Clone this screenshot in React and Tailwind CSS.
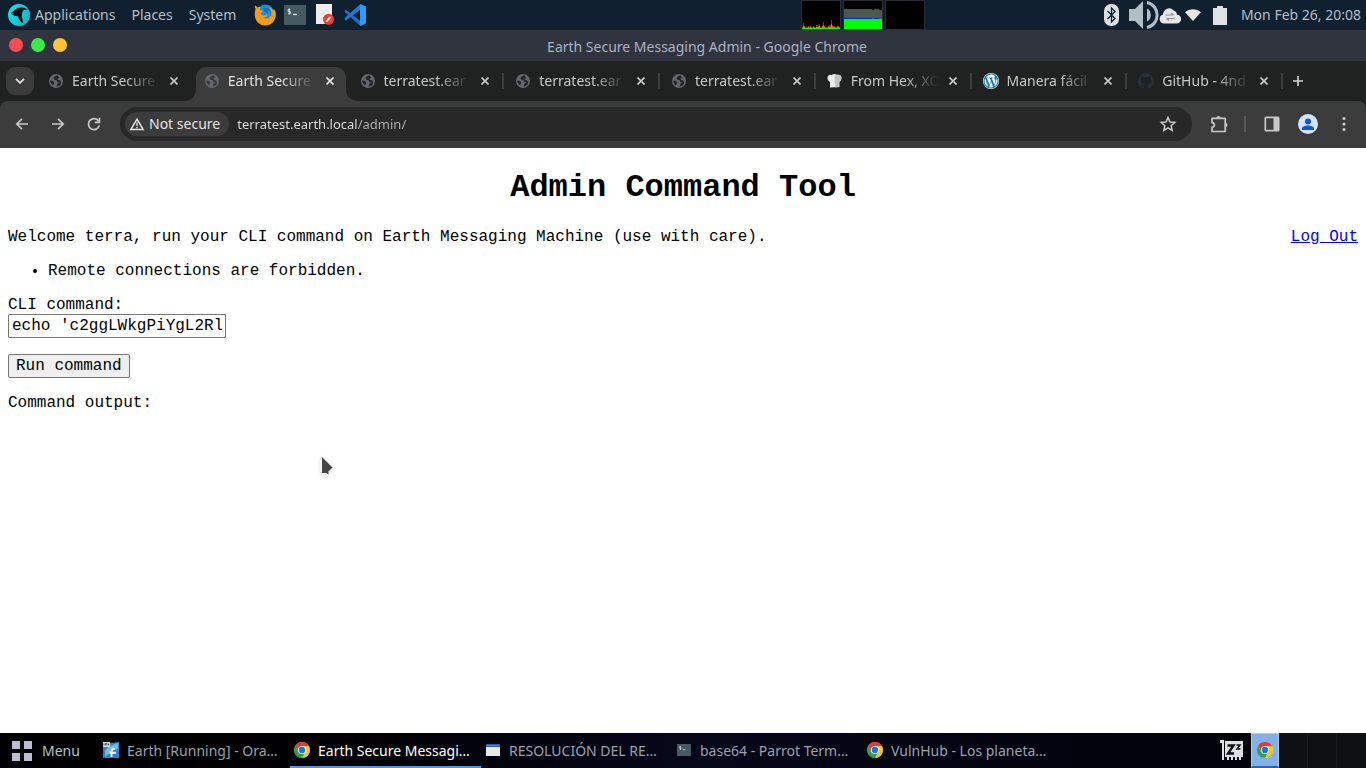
import React from "react";

const uiFont = "font-['Noto_Sans',sans-serif]";

function ParrotLogo() {
  return (
    <svg viewBox="0 0 22 22" className="size-[22px]" aria-hidden="true">
      <defs>
        <linearGradient id="parrot" x1="0" y1="0" x2="1" y2="0.5">
          <stop offset="0" stopColor="#12e6ee" />
          <stop offset="1" stopColor="#17b8cc" />
        </linearGradient>
      </defs>
      <circle cx="11" cy="11" r="11" fill="url(#parrot)" />
      <path d="M3 8.300C5.500 8 6.500 5.500 9 4.300 12 3 16 3.200 19.500 5.500c-2.800-.3-4.500.5-5 2.200-.6 2-.6 3.300-.4 5.300.2 2.500.8 4.500 1.400 6.500-2.800-1.500-5-4.300-5.500-7.300-2.500.3-5-.8-7-2.900 1.300.3 2.500.3 3.500 0C5 9.300 4 9 3 8.300z" fill="#0b0f14" />
    </svg>
  );
}

function FirefoxLogo() {
  return (
    <svg viewBox="0 0 22 22" className="size-[22px]" aria-hidden="true">
      <circle cx="11.500" cy="9" r="8.500" fill="#1a8fe0" />
      <path d="M1 1.500c1 .3 2 1.200 2.700 2 1-.5 2-.6 3.300-.2-1 .8-1.500 1.700-1 2.700 1 .2 2 .4 2.800.9-.2 1-1.200 1.600-2 2 .2 1.600 1.500 2.700 3.200 2.600 1.500-.1 2.400-1.200 3.800-.7-.7 2-3 3-4.800 2.900 3.500 2 8.200-.2 8.500-4.500.1-2.500-1-5-2.700-6.300 2 .6 3.700 2.200 4.600 4.100.3-.8.400-1.600.300-2.200C21.500 6.500 22 9 21.800 11.500 21.300 17.500 17 21.500 11.200 21.500 5.500 21.500 1 17 .8 11.300.7 8.500 1 6.500 1.500 5 1 4 .8 2.700 1 1.500z" fill="#f39a17" />
      <path d="M9 4.500c2.500-1.800 6-.5 7 2.500-1-.7-2-.8-2.700-.5.8 1 .7 2.200-.3 3-.5-1-1.400-1.600-2.500-1.700C10.500 6.500 10 5.500 9 4.500z" fill="#0f6fb8" />
    </svg>
  );
}

function TerminalLogo({ small }) {
  return (
    <svg viewBox="0 0 22 20" className={small ? "h-3 w-3.5" : "h-5 w-[22px]"} preserveAspectRatio="none" aria-hidden="true">
      <rect width="22" height="20" rx="1" fill="#465a64" />
      <path d="M6.300 4.500H4.200v2h2.100v2H4M5.300 3.500v6" stroke="#e8eef0" strokeWidth="0.9" fill="none" />
      <path d="M9 9.500h4" stroke="#e8eef0" strokeWidth="1.200" />
    </svg>
  );
}

function DocumentLogo() {
  return (
    <svg viewBox="0 0 18 21" className="h-[21px] w-[18px]" aria-hidden="true">
      <path d="M0 0h16v20H0z" fill="#ececec" />
      <circle cx="12.500" cy="15.300" r="5.500" fill="#f03c34" />
      <path d="M10.300 17.700l4.200-4.800" stroke="#fff" strokeWidth="2" />
    </svg>
  );
}

function CodeLogo() {
  return (
    <svg viewBox="0 0 22 22" className="size-[22px]" aria-hidden="true">
      <path d="M1.800 5.600 16.300 17.300v4.500L.5 8z" fill="#1f6fd0" />
      <path d="M.5 14.200 16.300.2v5.400L1.800 16.500z" fill="#1563b8" />
      <path d="M.5 14.200 1.800 16.500 16.300 5.500V.2z" fill="#2a85e0" opacity=".7" />
      <path d="M16 0l6 2.500v17L16 22z" fill="#2f9bf5" />
    </svg>
  );
}

const cpu = [1, 5, 2, 1, 1, 1, 2, 1, 2, 1, 1, 2, 1, 1, 3, 3, 2, 4, 1, 1, 2, 6, 2, 1, 1, 1, 2, 3, 3, 8, 3, 2, 2, 1, 1, 2, 2, 1];

function CpuGraph() {
  return (
    <svg viewBox="0 0 40 30" className="h-[30px] w-10" role="img" aria-label="Processor load">
      <rect x=".5" y=".5" width="39" height="29" fill="#000" stroke="#2a2d38" />
      {cpu.map((v, i) => (
        <g key={i}>
          <rect x={i + 1} y={28 - v} width="1" height={v + 1} fill="#f00" />
          <rect x={i + 1} y={29 - Math.ceil(v * 0.6)} width="1" height={Math.ceil(v * 0.6)} fill="#0f0" />
        </g>
      ))}
    </svg>
  );
}

function MemoryGraph() {
  return (
    <svg viewBox="0 0 40 30" className="h-[30px] w-10" role="img" aria-label="Memory use" shapeRendering="crispEdges">
      <path d="M0 0h40v30H0z" fill="#2a2d38" />
      <path d="M1 1h38v28H1z" fill="#000" />
      <path d="M1 9h28v1h2V9h5v1h3v9H1z" fill="#4a584f" />
      <path d="M1 18h28v1H1zM31 18h5v1h-5z" fill="#0a20f5" />
      <path d="M1 19h38v10H1z" fill="#0f0" />
    </svg>
  );
}

function BlankGraph() {
  return (
    <svg viewBox="0 0 40 30" className="h-[30px] w-10" role="img" aria-label="Network traffic">
      <rect x=".5" y=".5" width="39" height="29" fill="#000" stroke="#2a2d38" />
    </svg>
  );
}

function BluetoothIcon() {
  return (
    <svg viewBox="0 0 15 22" className="h-[22px] w-[15px]" aria-hidden="true">
      <rect width="15" height="22" rx="7" fill="#dde1e4" />
      <path d="M3.500 7l7.500 7.500L7.500 18V4L11 7.500 3.500 15" fill="none" stroke="#11202f" strokeWidth="1.300" />
    </svg>
  );
}

function VolumeIcon() {
  return (
    <svg viewBox="0 0 30 30" className="h-[30px] w-[30px]" aria-hidden="true">
      <path d="M0 9h6l8-8v28l-8-8H0z" fill="#b0bec6" />
      <path d="M18 8.500c5 2 5 11 0 13z" fill="#b0bec6" />
      <path d="M18 2.500c13.500 3 13.500 22 0 25" fill="none" stroke="#b0bec6" strokeWidth="3" />
    </svg>
  );
}

function CloudIcon() {
  return (
    <svg viewBox="0 0 22 17" className="h-[17px] w-[22px]" aria-hidden="true">
      <path d="M5 16.500a4.600 4.600 0 0 1-1-9C4 2.500 11-1.500 14.500 3.500c2 .3 3.300 1.800 3.300 4a4.500 4.500 0 0 1-.3 9z" fill="#e4e5e5" />
      <path d="M6.500 8h8M12 6l2.500 2M15.500 11.500h-8M10 13.500l-2.500-2" fill="none" stroke="#8a9095" strokeWidth="1.200" />
    </svg>
  );
}

function Globe({ active }) {
  const ink = active ? "#37393b" : "#222426";
  return (
    <svg viewBox="0 0 14 14" className="size-3.5" aria-hidden="true">
      <circle cx="7" cy="7" r="7" fill="#63666c" />
      <path d="M8.500 1.500C6.300 1.600 4.800 3 4.600 4.600c.1 1 1 1.300 1.900 1.400 1 .1 1.300.5 1.400 1.200.1.600.6.700 1.300.7.700.1.700.7.200 1.200-.9.700-1.300 1.300-1.400 2.200l-.4 1.300c1.800-.1 3.400-1.100 4.200-2.600.5-1.200.3-2.200-.4-3-.9-.9-2-.9-2.700-1.400-.7-.6-.3-1.100.5-1.300.7-.2.9-.7.600-1.300z" fill={ink} />
      <path d="M1.300 6.600c1.400 0 2.600.4 3.500 1.200.7.700.6 1.300 0 1.900-.5.400-.6.900-.7 1.600C2.300 10.400 1.300 8.600 1.300 6.600z" fill={ink} />
    </svg>
  );
}

function ChefIcon() {
  return (
    <svg viewBox="0 0 15 14" className="h-3.5 w-[15px]" aria-hidden="true">
      <path d="M1 2C2.500 0 4 .8 5 1c1-1.300 4-1.300 5 0 2-.8 4 .2 4.300 2 .5 2-.5 4-2 5v5L3 13.500V8C.5 7 0 4 1 2z" fill="#ececec" />
      <path d="M7.500 1.500 10 1c2-.8 4 .2 4.300 2 .5 2-.5 4-2 5v5l-4 .5z" fill="#c4c4c4" />
    </svg>
  );
}

function WordpressIcon() {
  return (
    <svg viewBox="0 0 24 24" className="size-4" aria-hidden="true">
      <circle cx="12" cy="12" r="12" fill="#fff" />
      <path d="M12 .8C5.800.8.800 5.800.800 12S5.800 23.200 12 23.200 23.200 18.200 23.200 12 18.200.8 12 .8zM2.400 12c0-1.400.3-2.700.8-3.900l4.600 12.500A9.600 9.600 0 0 1 2.400 12zm9.600 9.600c-.9 0-1.800-.1-2.700-.4l2.900-8.400 3 8.100.1.100c-1 .4-2.100.6-3.300.6zm1.300-14.100 1.100-.1c.5-.1.500-.8 0-.8 0 0-1.600.1-2.600.1-.9 0-2.500-.1-2.500-.1-.5 0-.6.8-.1.800l1 .1 1.500 4.100-2.100 6.300L6.100 7.500l1.100-.1c.5-.1.500-.8 0-.8 0 0-1.600.1-2.600.1H4a9.600 9.600 0 0 1 14.500-1.800h-.1c-.9 0-1.600.8-1.600 1.700 0 .8.500 1.400.9 2.200.4.600.8 1.400.8 2.600 0 .8-.2 1.800-.7 3l-.9 3.200zM16.800 20.300l3-8.500c.5-1.400.7-2.500.7-3.500v-.9a9.600 9.600 0 0 1-3.700 12.900z" fill="#0f7aae" />
    </svg>
  );
}

function GithubIcon() {
  return (
    <svg viewBox="0 0 16 16" className="size-4" aria-hidden="true">
      <path d="M8 0a8 8 0 0 0-2.530 15.590c.4.070.55-.17.550-.38v-1.490c-2.010.37-2.530-.49-2.690-.94-.09-.23-.48-.94-.82-1.130-.28-.15-.68-.52-.01-.53.63-.01 1.080.58 1.230.82.72 1.210 1.870.87 2.330.66.070-.52.280-.87.510-1.070-1.780-.2-3.640-.89-3.640-3.950 0-.87.310-1.590.820-2.150-.080-.2-.360-1.020.080-2.120 0 0 .67-.21 2.200.82a7.600 7.600 0 0 1 4 0c1.530-1.040 2.200-.82 2.200-.82.440 1.100.160 1.920.080 2.120.51.56.82 1.270.82 2.150 0 3.070-1.870 3.750-3.650 3.950.29.250.54.730.54 1.480v2.200c0 .21.150.46.550.38A8 8 0 0 0 8 0z" fill="#28303a" />
    </svg>
  );
}

function ChromeLogo() {
  return (
    <svg viewBox="0 0 48 48" className="size-4" aria-hidden="true">
      <circle cx="24" cy="24" r="23" fill="#fff" />
      <path d="M3.200 12A24 24 0 0 1 44.800 12H24a12 12 0 0 0-10.400 18z" fill="#e33b2e" />
      <path d="M44.800 12A24 24 0 0 1 24 48l10.400-18A12 12 0 0 0 24 12z" fill="#fcc31e" />
      <path d="M24 48A24 24 0 0 1 3.200 12l10.400 18a12 12 0 0 0 20.800 0z" fill="#2da04e" />
      <circle cx="24" cy="24" r="12" fill="#fff" />
      <circle cx="24" cy="24" r="9.500" fill="#1a73e8" />
    </svg>
  );
}

function VirtualBoxIcon() {
  return (
    <svg viewBox="0 0 16 16" className="size-4" aria-hidden="true">
      <path d="M0 2l16-2v16H0z" fill="#2f7fc4" />
      <path d="M2 9C4 5 9 3 15 1v6C10 7 6 12 2 15z" fill="#64bdf2" />
      <path d="M0 0h7v5H0z" fill="#d9dde0" />
      <path d="M1 3.500V1.500M2.500 3.500V1.500h1.500v2M5.500 3.500V1.500" stroke="#333" strokeWidth=".8" fill="none" />
      <path d="M8.500 15V9.500c0-2 1-3 3.500-2.800M6.500 10.700H13" fill="none" stroke="#fff" strokeWidth="1.900" />
    </svg>
  );
}

function WindowIcon() {
  return (
    <svg viewBox="0 0 14 12" className="h-3 w-3.5" aria-hidden="true">
      <path d="M0 0h14v12H0z" fill="#e9e9e4" />
      <path d="M0 0h14v3H0z" fill="#2d5fa5" />
      <path d="M1 1h12v1H1z" fill="#4f86cf" />
    </svg>
  );
}

function SleepIcon() {
  return (
    <svg viewBox="0 0 24 21" className="h-[21px] w-6" aria-hidden="true">
      <path d="M0 0h4v20H2V3H0z" fill="#dcdfe4" />
      <path d="M5 1h18v16H5zM7 17h2v3H7zM11 17h2v3h-2zM15 17h2v3h-2zM19 17h2v3h-2z" fill="#dcdfe4" />
      <path d="M7.500 5.500h6l-5.500 8h6" fill="none" stroke="#111" strokeWidth="2.400" />
      <path d="M16.500 5h3.500l-3 4h3.500" fill="none" stroke="#111" strokeWidth="1.500" />
    </svg>
  );
}

const line = { fill: "none", stroke: "currentColor", strokeWidth: 1.7 };

function BackIcon() {
  return (
    <svg viewBox="0 0 16 16" className="size-4" aria-hidden="true">
      <path d="M14 8H3M8 2.800 2.800 8 8 13.200" {...line} />
    </svg>
  );
}

function ForwardIcon() {
  return (
    <svg viewBox="0 0 16 16" className="size-4" aria-hidden="true">
      <path d="M2 8h11M8 2.800 13.200 8 8 13.200" {...line} />
    </svg>
  );
}

function ReloadIcon() {
  return (
    <svg viewBox="0 0 16 16" className="size-4" aria-hidden="true">
      <path d="M13.300 9.400A5.500 5.500 0 1 1 12.500 5" {...line} />
      <path d="M13.400 1.800v4.600H8.800" {...line} />
    </svg>
  );
}

function WarningIcon() {
  return (
    <svg viewBox="0 0 16 14" className="h-3.5 w-4" aria-hidden="true">
      <path d="M8 2.200 14.200 12.500H1.800z" fill="none" stroke="#e3e3e3" strokeWidth="1.500" />
      <path d="M8 5.500v3.300M8 9.800v1.500" stroke="#e3e3e3" strokeWidth="1.400" />
    </svg>
  );
}

function StarIcon() {
  return (
    <svg viewBox="0 0 24 24" className="size-[18px]" aria-hidden="true">
      <path d="M12 3.300l2.600 6 6.500.6-4.900 4.300 1.400 6.400L12 17.200l-5.600 3.400 1.400-6.400L2.900 9.900l6.500-.6z" fill="none" stroke="currentColor" strokeWidth="2" />
    </svg>
  );
}

function PuzzleIcon() {
  return (
    <svg viewBox="0 0 18 18" className="size-[18px]" aria-hidden="true">
      <path d="M2 3.300h13.200v13.200H2v-4.200c3.200-.3 3.200-4.300 0-4.600z" {...line} strokeLinejoin="round" />
      <path d="M6.300 3.300a2.200 2.200 0 0 1 4.400 0zM15.200 7.700a2.200 2.200 0 0 1 0 4.400z" fill="currentColor" />
    </svg>
  );
}

function PanelIcon() {
  return (
    <svg viewBox="0 0 16 16" className="size-4" aria-hidden="true">
      <rect x="1.300" y="1.300" width="13.400" height="13.400" rx="1" {...line} />
      <path d="M9.500 1.500h5v13h-5z" fill="currentColor" />
    </svg>
  );
}

function CloseIcon() {
  return (
    <svg viewBox="0 0 8 8" className="size-2" aria-hidden="true">
      <path d="M.5.5l7 7M7.500.5l-7 7" fill="none" stroke="currentColor" strokeWidth="1.700" />
    </svg>
  );
}

const tabs = [
  { title: "Earth Secure", icon: <Globe /> },
  { title: "Earth Secure", icon: <Globe active />, active: true },
  { title: "terratest.ear", icon: <Globe /> },
  { title: "terratest.ear", icon: <Globe /> },
  { title: "terratest.ear", icon: <Globe /> },
  { title: "From Hex, XO", icon: <ChefIcon /> },
  { title: "Manera fácil", icon: <WordpressIcon /> },
  { title: "GitHub - 4nd", icon: <GithubIcon /> },
];

function Flare({ side }) {
  return (
    <svg viewBox="0 0 12 12" className={side === "left" ? "absolute right-full bottom-0 size-3" : "absolute left-full bottom-0 size-3"} aria-hidden="true">
      <path d={side === "left" ? "M12 0v12H0C7 12 12 7 12 0z" : "M0 0v12h12C5 12 0 7 0 0z"} fill="#3c3c3c" />
    </svg>
  );
}

function Tab({ tab, separator }) {
  return (
    <div className="relative flex h-[34px] min-w-0 flex-1 px-[3px]">
      <div className={tab.active ? "relative flex min-w-0 flex-1 items-center rounded-t-[10px] bg-[#3c3c3c] px-2 pb-1.5 text-[#e3e3e3]" : "relative flex min-w-0 flex-1 items-center px-2 pb-1.5 text-[#c7c7c7]"}>
        {tab.active && <Flare side="left" />}
        {tab.active && <Flare side="right" />}
        <button type="button" role="tab" aria-selected={!!tab.active} className="flex min-w-0 flex-1 items-center gap-2">
          <span className="flex w-4 shrink-0 justify-center">{tab.icon}</span>
          <span className="min-w-0 flex-1 overflow-hidden text-left text-sm whitespace-nowrap [mask-image:linear-gradient(to_right,#000_60%,transparent)]">{tab.title}</span>
        </button>
        <button type="button" aria-label="Close tab" className="ml-1.5 flex size-4 items-center justify-center">
          <CloseIcon />
        </button>
      </div>
      {separator && <span className="absolute top-1.5 right-0 h-4 w-0.5 bg-[#3c3e3e]" />}
    </div>
  );
}

function TopPanel() {
  return (
    <header className="grid h-[30px] grid-cols-2 items-center bg-[#11202f] text-sm text-[#b4bfca]">
      <nav className="flex h-full items-center pb-px pl-2">
        <button type="button" className="flex items-center gap-[5px]">
          <ParrotLogo />
          Applications
        </button>
        <button type="button" className="ml-4">Places</button>
        <button type="button" className="ml-4">System</button>
        <div className="ml-[18px] flex items-center gap-2">
          <button type="button" aria-label="Firefox"><FirefoxLogo /></button>
          <button type="button" aria-label="Terminal"><TerminalLogo /></button>
          <button type="button" aria-label="Text editor" className="px-0.5"><DocumentLogo /></button>
          <button type="button" aria-label="Code editor"><CodeLogo /></button>
        </div>
      </nav>
      <div className="flex items-center justify-between pr-[5px]">
        <div className="ml-[118px] flex gap-0.5">
          <CpuGraph />
          <MemoryGraph />
          <BlankGraph />
        </div>
        <div className="flex items-center">
          <BluetoothIcon />
          <span className="ml-2.5"><VolumeIcon /></span>
          <CloudIcon />
          <svg viewBox="0 0 16 12" className="ml-1 h-3 w-4" aria-hidden="true">
            <path d="M0 3.200C4.500-.9 11.500-.9 16 3.200L8 12z" fill="#e4e6e8" />
          </svg>
          <svg viewBox="0 0 14 19" className="ml-3 h-[19px] w-3.5" aria-hidden="true">
            <path d="M4 0h6v2h4v17H0V2h4z" fill="#dfe2e4" />
          </svg>
          <time className="ml-[14px] pb-px">Mon Feb 26, 20:08</time>
        </div>
      </div>
    </header>
  );
}

function BrowserChrome() {
  return (
    <>
      <div className="grid h-[31px] grid-cols-[1fr_auto_1fr] items-center bg-[#30343f]">
        <div className="flex h-full items-start gap-2 pt-2 pl-[9px]">
          <button type="button" aria-label="Close" className="size-3.5 rounded-full bg-[#f44e55]" />
          <button type="button" aria-label="Maximize" className="size-3.5 rounded-full bg-[#3aec4a]" />
          <button type="button" aria-label="Minimize" className="size-3.5 rounded-full bg-[#fbc436]" />
        </div>
        <div className="pt-0.5 pl-12 text-sm text-[#a9b3c4]">Earth Secure Messaging Admin - Google Chrome</div>
        <div />
      </div>
      <div className="bg-[#202222]">
        <div className="flex h-10 items-end">
          <div className="flex h-full items-center pl-1.5">
            <button type="button" aria-label="Search tabs" className="flex size-7 items-center justify-center rounded-[9px] bg-[#3c3c3c] text-[#e3e3e3]">
              <svg viewBox="0 0 10 6" className="h-1.5 w-2.5" aria-hidden="true">
                <path d="M1 .8 5 4.800 9 .8" fill="none" stroke="currentColor" strokeWidth="1.800" />
              </svg>
            </button>
          </div>
          <div role="tablist" className="ml-[3px] flex min-w-0 flex-1">
            {tabs.map((tab, i) => (
              <Tab key={i} tab={tab} separator={i > 1} />
            ))}
          </div>
          <div className="flex h-full w-[83px] shrink-0 items-center pl-[7px]">
            <button type="button" aria-label="New tab" className="flex size-4 items-center justify-center text-[#d5d5d5]">
              <svg viewBox="0 0 12 12" className="size-3" aria-hidden="true">
                <path d="M6 1v10M1 6h10" stroke="currentColor" strokeWidth="1.600" />
              </svg>
            </button>
          </div>
        </div>
        <div className="flex h-[47px] items-center rounded-t-lg bg-[#3c3c3c] px-3.5 pb-px text-[#c7c7c7]">
          <div className="flex gap-5">
            <button type="button" aria-label="Back"><BackIcon /></button>
            <button type="button" aria-label="Forward"><ForwardIcon /></button>
            <button type="button" aria-label="Reload"><ReloadIcon /></button>
          </div>
          <div className="ml-[18px] flex h-[34px] min-w-0 flex-1 items-center rounded-full bg-[#282828] pr-[15px] pl-[5px]">
            <button type="button" className="flex h-6 shrink-0 items-center gap-1 rounded-full bg-[#3c3c3c] pr-[9px] pl-1 text-sm text-[#e3e3e3]">
              <WarningIcon />
              Not secure
            </button>
            <input
              type="text"
              aria-label="Address"
              defaultValue="terratest.earth.local/admin/"
              className="ml-2 h-6 min-w-0 flex-1 bg-[linear-gradient(to_right,#e3e3e3_121px,#b4b4b4_121px)] bg-clip-text text-[13px] text-transparent outline-none"
            />
            <button type="button" aria-label="Bookmark"><StarIcon /></button>
          </div>
          <div className="ml-[18px] flex items-center">
            <button type="button" aria-label="Extensions"><PuzzleIcon /></button>
            <span className="ml-4 h-4 w-0.5 bg-[#5a5a5a]" />
            <button type="button" aria-label="Side panel" className="ml-[18px]"><PanelIcon /></button>
            <button type="button" aria-label="Profile" className="ml-[18px]">
              <svg viewBox="0 0 20 20" className="size-5" aria-hidden="true">
                <circle cx="10" cy="10" r="10" fill="#d3e3fd" />
                <circle cx="10" cy="7.500" r="3" fill="#0b57d0" />
                <path d="M4 16v-1.500c0-2 3-3 6-3s6 1 6 3V16z" fill="#0b57d0" />
              </svg>
            </button>
            <button type="button" aria-label="More" className="ml-[18px]">
              <svg viewBox="0 0 16 16" className="size-4" aria-hidden="true">
                <circle cx="8" cy="2.500" r="1.600" fill="currentColor" />
                <circle cx="8" cy="8" r="1.600" fill="currentColor" />
                <circle cx="8" cy="13.500" r="1.600" fill="currentColor" />
              </svg>
            </button>
          </div>
        </div>
      </div>
    </>
  );
}

function AdminPage() {
  return (
    <main className="relative flex-1 bg-white px-2 pt-[22px] pb-4 font-['Liberation_Mono',monospace] text-base leading-[18px] text-black">
      <h1 className="text-center text-[32px] leading-9 font-bold">Admin Command Tool</h1>
      <div className="mt-[22px] flex justify-between">
        <p>Welcome terra, run your CLI command on Earth Messaging Machine (use with care).</p>
        <a href="#logout" className="text-[#0000ee] underline">Log Out</a>
      </div>
      <ul className="mt-4 list-disc pl-10">
        <li>Remote connections are forbidden.</li>
      </ul>
      <form className="mt-4" onSubmit={(e) => e.preventDefault()}>
        <label htmlFor="cli" className="block">CLI command:</label>
        <input
          id="cli"
          type="text"
          defaultValue="echo 'c2ggLWkgPiYgL2Rl"
          className="block h-6 w-[218px] rounded-[1px] border border-[#767676] bg-white px-[3px] outline-none"
        />
        <button type="submit" className="mt-4 block h-6 rounded-[2px] border border-[#767676] bg-[#efefef] px-[7px]">Run command</button>
      </form>
      <p className="mt-4">Command output:</p>
      <svg viewBox="0 0 14 22" className="absolute top-[307px] left-[320px] h-[22px] w-3.5 drop-shadow-sm" aria-hidden="true">
        <path d="M1.500 1v17.500h5l2.500 2v-4L13 12.500z" fill="#444" stroke="#fff" />
      </svg>
    </main>
  );
}

const tasks = [
  { title: "Earth [Running] - Ora…", icon: <VirtualBoxIcon /> },
  { title: "Earth Secure Messagi…", icon: <ChromeLogo />, active: true },
  { title: "RESOLUCIÓN DEL RE…", icon: <WindowIcon /> },
  { title: "base64 - Parrot Term…", icon: <TerminalLogo small /> },
  { title: "VulnHub - Los planeta…", icon: <ChromeLogo /> },
];

function Taskbar() {
  return (
    <footer className="flex h-[35px] items-stretch bg-linear-to-r from-black via-[#07071a] to-[#020207] text-sm text-[#9aa1ae]">
      <button type="button" className="flex w-[99px] shrink-0 items-center gap-2.5 pl-3 text-[#b9c1cf]">
        <svg viewBox="0 0 20 20" className="size-5" aria-hidden="true">
          <path d="M0 0h8v8H0zM12 0h8v8h-8zM0 12h8v8H0zM12 12h8v8h-8z" fill="#b9bfce" />
        </svg>
        Menu
      </button>
      <div className="flex min-w-0 flex-1">
        {tasks.map((task) => (
          <button
            key={task.title}
            type="button"
            className={task.active ? "flex w-[191px] min-w-0 items-center gap-2 border-b-2 border-[#5294e2] px-1 text-white" : "flex w-[191px] min-w-0 items-center gap-2 border-b-2 border-transparent px-1"}
          >
            <span className="flex w-4 shrink-0 justify-center">{task.icon}</span>
            <span className="min-w-0 flex-1 truncate pt-0.5 text-left">{task.title}</span>
          </button>
        ))}
      </div>
      <div className="mr-[7px] flex items-center"><SleepIcon /></div>
      <div className="flex bg-[#0e1013]">
        <button type="button" aria-label="Workspace 1" className="flex w-7 items-center justify-center border-t border-r border-b-2 border-l border-[#a9cbf5] border-b-[#2f63a5] bg-[#84b0ea]">
          <ChromeLogo />
        </button>
        <button type="button" aria-label="Workspace 2" className="w-[29px] border-r border-[#17191c]" />
        <button type="button" aria-label="Workspace 3" className="w-[29px] border-r border-[#17191c]" />
        <button type="button" aria-label="Workspace 4" className="w-[29px]" />
      </div>
    </footer>
  );
}

export default function App() {
  return (
    <div className={`flex min-h-screen flex-col ${uiFont}`}>
      <TopPanel />
      <BrowserChrome />
      <AdminPage />
      <Taskbar />
    </div>
  );
}
